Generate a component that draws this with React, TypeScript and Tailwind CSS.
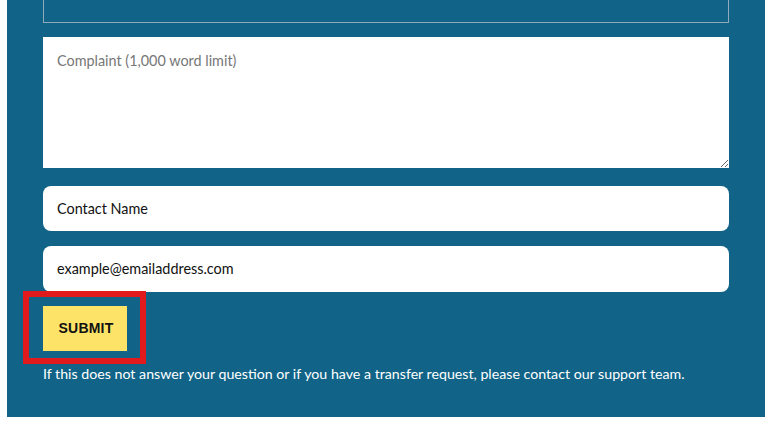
export default function App() {
  return (
    <div className="w-[777px] h-[430px] bg-white overflow-hidden" style={{ fontFamily: 'Lato, "Open Sans", sans-serif' }}>
      <div className="relative ml-[7px] w-[758px] h-[417px] bg-[#116488] pl-[36px] pr-[36px]">
        {/* previous field, cut off at the top */}
        <div className="h-[23px] border border-t-0 border-[#8eaabb]" />

        <textarea
          placeholder="Complaint (1,000 word limit)"
          className="block mt-[14px] w-[686px] h-[131px] bg-white px-[14px] py-[14px] text-[14.4px] leading-[20px] text-[#222] placeholder:text-[#777] outline-none"
        />

        <input
          placeholder="Contact Name"
          className="block mt-[18px] w-[686px] h-[45px] rounded-[8px] bg-white px-[14px] text-[14.4px] text-[#111] placeholder:text-[#111] outline-none"
        />

        <input
          placeholder="example@emailaddress.com"
          className="block mt-[15px] w-[686px] h-[46px] rounded-[8px] bg-white px-[14px] pb-[2px] text-[14.4px] text-[#111] placeholder:text-[#111] outline-none"
        />

        <button
          className="block mt-[14px] w-[84px] h-[45px] pl-[2px] bg-[#fde468] text-[14px] font-bold tracking-[0.2px] text-[#111]"
          style={{ fontFamily: '"Liberation Sans", Arial, sans-serif' }}
        >
          SUBMIT
        </button>

        <p className="mt-[13px] text-[14.2px] leading-[20px] text-white">
          If this does not answer your question or if you have a transfer request, please contact our support team.
        </p>

        {/* highlight annotation */}
        <div className="absolute left-[16px] top-[291px] w-[123px] h-[73px] border-[6px] border-[#e11b1d]" />
      </div>
    </div>
  )
}
